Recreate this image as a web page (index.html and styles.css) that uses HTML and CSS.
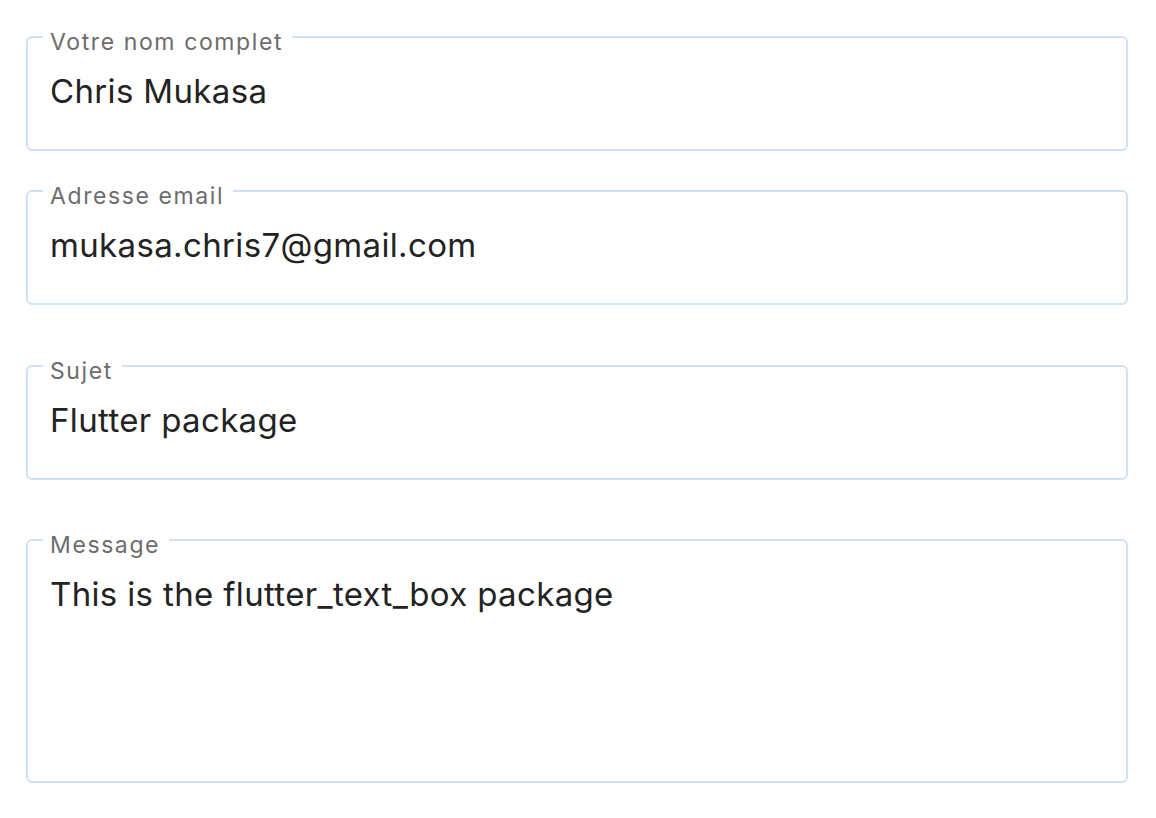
FILE: index.html
```html
<!DOCTYPE html>
<html lang="fr">
<head>
<meta charset="utf-8">
<title>Formulaire de contact</title>
<link rel="stylesheet" href="styles.css">
</head>
<body>
<form class="form">
  <fieldset class="box box-name">
    <legend class="label">Votre nom complet</legend>
    <div class="value">Chris Mukasa</div>
  </fieldset>
  <fieldset class="box box-email">
    <legend class="label">Adresse email</legend>
    <div class="value">mukasa.chris7@gmail.com</div>
  </fieldset>
  <fieldset class="box box-subject">
    <legend class="label">Sujet</legend>
    <div class="value">Flutter package</div>
  </fieldset>
  <fieldset class="box box-message">
    <legend class="label">Message</legend>
    <div class="value value-multi">This is the flutter_text_box package</div>
  </fieldset>
</form>
</body>
</html>
```
FILE: styles.css
```css
* { box-sizing: border-box; }

html, body {
  margin: 0;
  padding: 0;
  background: #ffffff;
}

body {
  font-family: Inter, "Noto Sans", sans-serif;
}

.form {
  padding: 19px 0 0 26px;
  width: 1128px;
}

.box {
  margin: 0;
  min-inline-size: 0;
  width: 1102px;
  padding: 0 20px 0 22px;
  border: 2px solid #cfe1f9;
  border-radius: 6px;
}

.box-email { margin-top: 22px; }
.box-subject { margin-top: 43px; }
.box-message { margin-top: 42px; }

.label {
  margin-left: -7px;
  padding: 10px 9px 0 7px;
  font-size: 23px;
  line-height: 26px;
  color: #6c6c6c;
  letter-spacing: 1.6px;
}

.value {
  padding: 16px 0 38px;
  font-size: 33px;
  line-height: 40px;
  color: #232323;
  letter-spacing: 0.35px;
}

.value-multi {
  padding-bottom: 167px;
}
```
